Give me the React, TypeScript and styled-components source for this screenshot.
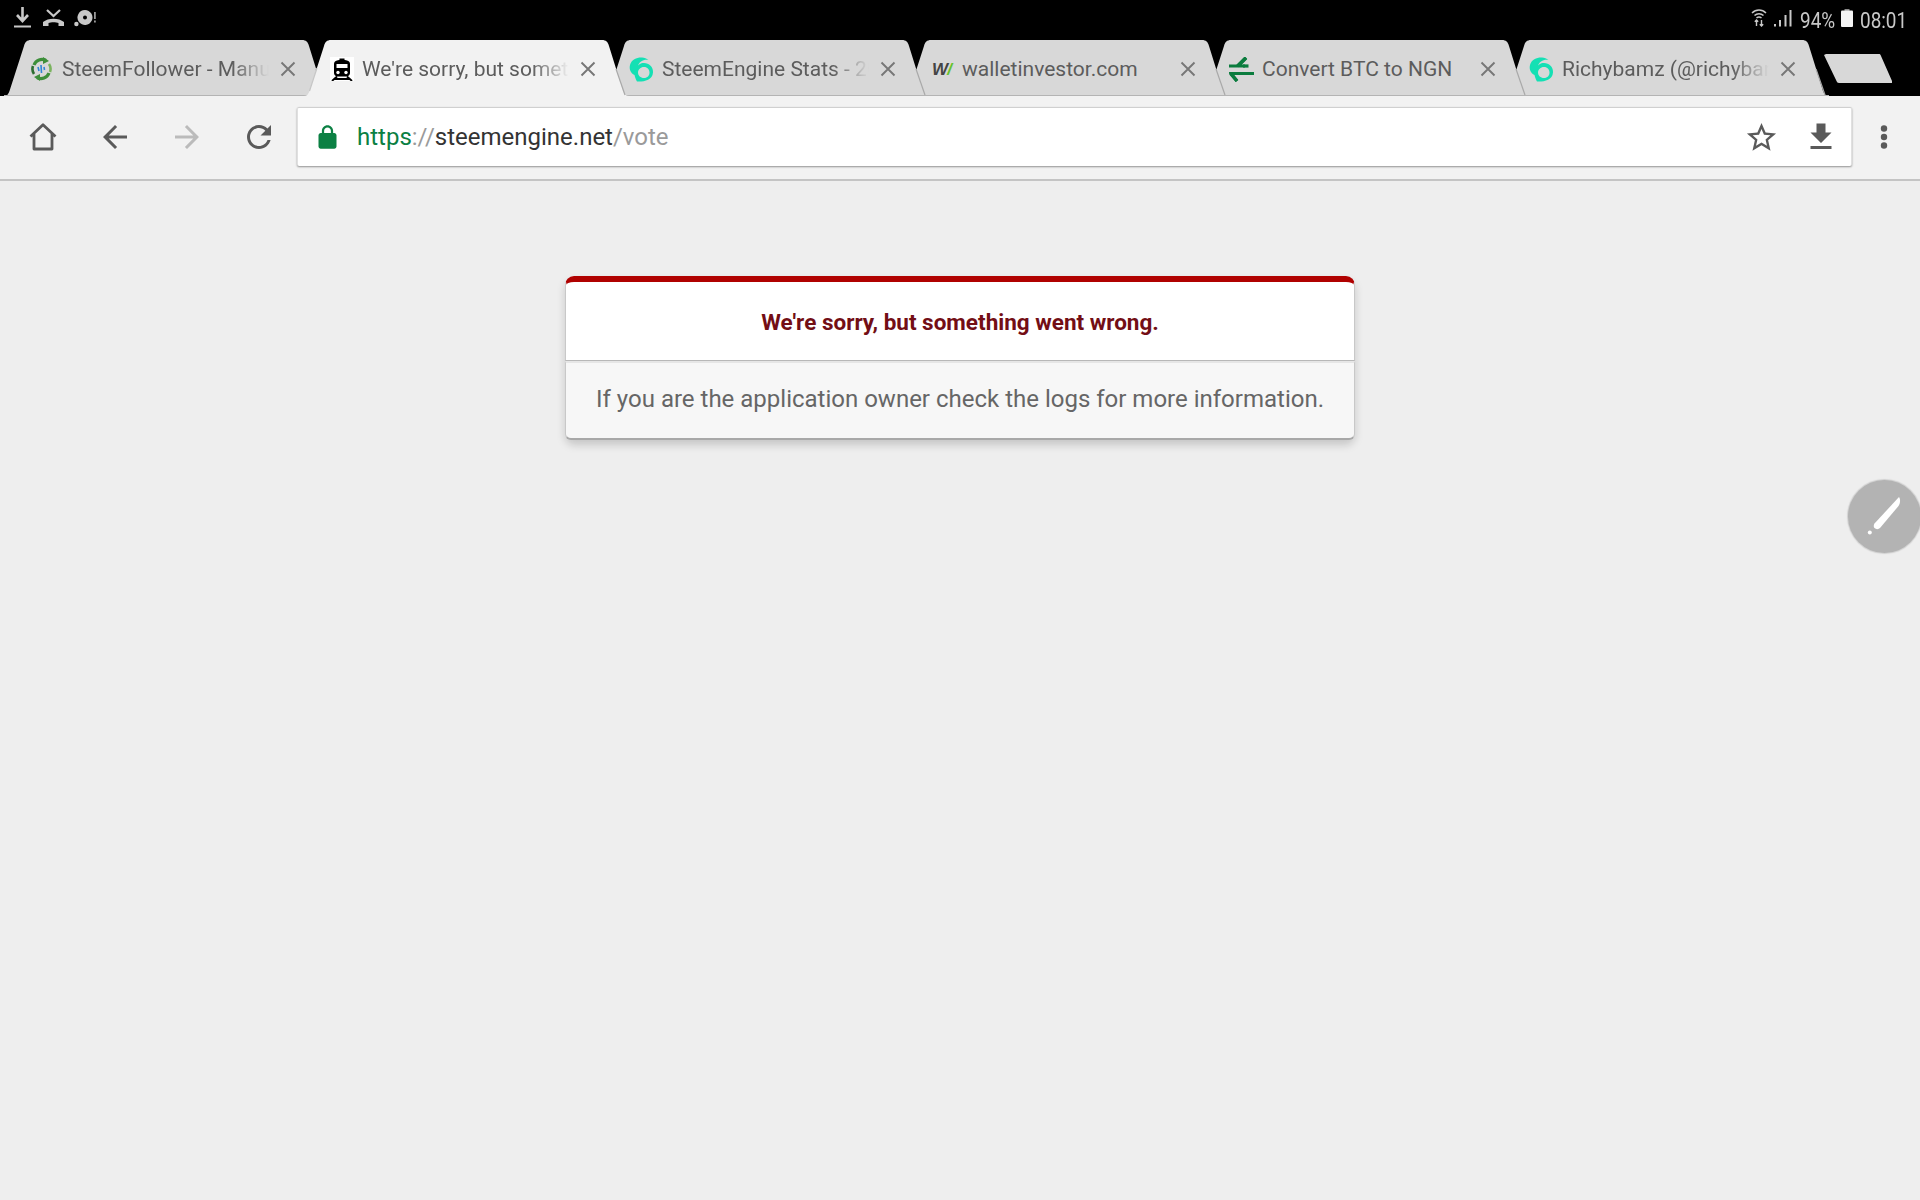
import * as React from "react";
import styled, { createGlobalStyle } from "styled-components";

const GlobalStyle = createGlobalStyle`
  html, body {
    margin: 0;
    padding: 0;
    background: #eeeeee;
  }
  * {
    box-sizing: border-box;
  }
`;

const Page = styled.div`
  position: relative;
  width: 1920px;
  height: 1200px;
  overflow: hidden;
  display: flex;
  flex-direction: column;
  background: #eeeeee;
  font-family: Roboto, "Liberation Sans", sans-serif;
`;

/* status bar */
const StatusBar = styled.div`
  height: 40px;
  background: #000;
  display: flex;
  align-items: center;
  justify-content: space-between;
  padding: 0 15px 5px 14px;
  color: #c8c8c8;
`;

const StatusGroup = styled.div`
  display: flex;
  align-items: center;
`;

const StatusText = styled.span<{ $w: number }>`
  display: inline-block;
  width: ${p => p.$w}px;
  font-size: 22px;
  line-height: 26px;
  white-space: nowrap;
  transform: scaleX(0.86);
  transform-origin: left center;
  margin-top: 6px;
`;

const StatusIcon = styled.svg<{ $ml?: number; $mr?: number }>`
  display: block;
  margin-left: ${p => p.$ml || 0}px;
  margin-right: ${p => p.$mr || 0}px;
`;

/* tab strip */
const TabStrip = styled.div`
  height: 56px;
  background: #000;
  display: flex;
  padding-left: 4px;
`;

const TabWrap = styled.div<{ $z: number; $first: boolean }>`
  position: relative;
  z-index: ${p => p.$z};
  flex: none;
  width: 325px;
  height: 56px;
  margin-left: ${p => (p.$first ? 0 : -25)}px;
  display: flex;
  align-items: center;
  padding: 2px 0 0 25px;
`;

const TabShape = styled.svg`
  position: absolute;
  left: 0;
  top: 0;
`;

const FaviconSlot = styled.div`
  position: relative;
  flex: none;
  width: 25px;
  height: 25px;
  display: flex;
  align-items: center;
  justify-content: center;
`;

const WalletMark = styled.span`
  font-family: "Liberation Sans", sans-serif;
  font-weight: 700;
  font-style: italic;
  font-size: 17px;
  line-height: 17px;
  color: #444;
  letter-spacing: -1px;
`;

const WalletSlash = styled.span`
  color: #66c22e;
`;

const TabTitle = styled.div<{ $fade: boolean }>`
  position: relative;
  flex: none;
  width: 207px;
  margin-left: 8px;
  overflow: hidden;
  white-space: nowrap;
  font-size: 21px;
  line-height: 28px;
  color: #5c5c5c;
  ${p =>
    p.$fade
      ? `-webkit-mask-image: linear-gradient(to right, #000 170px, transparent 207px);
         mask-image: linear-gradient(to right, #000 170px, transparent 207px);`
      : ""}
`;

const CloseIcon = styled.svg`
  position: relative;
  flex: none;
  margin-left: 11px;
`;

const NewTab = styled.svg`
  flex: none;
  margin: 14px 0 0 -5px;
  position: relative;
`;

/* toolbar */
const Toolbar = styled.div`
  height: 85px;
  background: #f2f2f2;
  border-bottom: 2px solid #c4c4c4;
  display: flex;
  align-items: center;
  padding: 0 0 2px 7px;
`;

const NavButton = styled.div`
  flex: none;
  width: 72px;
  height: 48px;
  display: flex;
  align-items: center;
  justify-content: center;
`;

const UrlBar = styled.div`
  flex: none;
  width: 1555px;
  height: 59px;
  margin-left: 2px;
  background: #fff;
  border-radius: 2px;
  border-top: 1px solid #d0d0d0;
  border-left: 1px solid #e0e0e0;
  border-right: 1px solid #e0e0e0;
  box-shadow: 0 1px 2px rgba(0, 0, 0, 0.4);
  display: flex;
  align-items: center;
  padding-left: 16px;
`;

const LockSlot = styled.div`
  flex: none;
  width: 27px;
  height: 27px;
  margin-right: 16px;
`;

const UrlText = styled.div`
  flex: 1;
  font-size: 24px;
  line-height: 30px;
  white-space: nowrap;
  color: #9a9a9a;
`;

const UrlPart = styled.span<{ $color: string }>`
  color: ${p => p.$color};
`;

const UrlAction = styled.div`
  flex: none;
  width: 60px;
  height: 48px;
  display: flex;
  align-items: center;
  justify-content: center;
`;

const MenuButton = styled.div`
  flex: none;
  width: 64px;
  display: flex;
  justify-content: center;
`;

/* error card */
const Content = styled.main`
  flex: 1;
  display: flex;
  justify-content: center;
  padding-top: 95px;
`;

const Card = styled.div`
  width: 790px;
  height: 164px;
  border-radius: 9px;
  box-shadow: 0 5px 9px rgba(0, 0, 0, 0.17);
  display: flex;
  flex-direction: column;
`;

const CardHead = styled.div`
  height: 85px;
  background: #fff;
  border-top: 6px solid #b00100;
  border-left: 1px solid #c8c8c8;
  border-right: 1px solid #c8c8c8;
  border-bottom: 1px solid #b8b8b8;
  border-radius: 9px 9px 0 0;
  display: flex;
  align-items: center;
  justify-content: center;
`;

const CardTitle = styled.h1`
  margin: 2px 0 0;
  font-size: 22.5px;
  line-height: 30px;
  font-weight: 700;
  color: #730e15;
`;

const CardBody = styled.div`
  flex: 1;
  background: #f7f7f7;
  border-top: 2px solid #e6e6e6;
  border-left: 1px solid #c8c8c8;
  border-right: 1px solid #c8c8c8;
  border-bottom: 2px solid #a8a8a8;
  border-radius: 0 0 6px 6px;
  display: flex;
  align-items: center;
  justify-content: center;
`;

const CardText = styled.p`
  margin: 0 0 4px;
  font-size: 24px;
  line-height: 30px;
  color: #666;
`;

/* floating pen button */
const PenButton = styled.div`
  position: absolute;
  left: 1848px;
  top: 480px;
  width: 73px;
  height: 73px;
  border-radius: 50%;
  background: #b3b3b3;
  box-shadow: 0 0 1px 1px #d0d0d0;
  display: flex;
  align-items: center;
  justify-content: center;
`;

const SideLine = "#a9a9a9";

const TabOutline: React.FC<{ active: boolean }> = ({ active }) => (
  <TabShape width="325" height="56" viewBox="0 0 325 56">
    <path
      d="M0 56 C3 56 4.5 54 5.5 51 L20 6 C21 2 23 0 27 0 L298 0 C302 0 304 2 305 6 L319 51 C320 54 322 56 325 56 Z"
      fill={active ? "#f2f2f2" : "#d8d8d8"}
    />
    {!active && <rect x="0" y="55" width="325" height="1" fill="#b4b4b4" />}
    <path d="M5.5 51 L13 28" stroke="#c6c6c6" strokeWidth="1.2" fill="none" opacity={active ? 1 : 0} />
    <path d="M312 29 L321 55" stroke={SideLine} strokeWidth="1.2" fill="none" />
  </TabShape>
);

const FollowerIcon = () => (
  <svg width="21" height="24" viewBox="0 0 21 24">
    <path d="M3 8 A8.5 8.5 0 0 1 15 3.5" stroke="#3d8f3a" strokeWidth="3.2" fill="none" />
    <path d="M18 16 A8.5 8.5 0 0 1 6 20.5" stroke="#3d8f3a" strokeWidth="3.2" fill="none" />
    <path d="M12 0 L18 4 L12 7 Z" fill="#3d8f3a" />
    <path d="M9 24 L3 20 L9 17 Z" fill="#3d8f3a" />
    <path d="M2 9 A9 9 0 0 0 3 17" stroke="#2c6e31" strokeWidth="2.6" fill="none" />
    <path d="M19 15 A9 9 0 0 0 18 7" stroke="#7ab35e" strokeWidth="2.6" fill="none" />
    <path d="M7 10 L8 14 M10 8 L10.5 16 M13 10 L13.5 13" stroke="#2f86d6" strokeWidth="1.6" fill="none" />
  </svg>
);

const TrainIcon = () => (
  <svg width="24" height="24" viewBox="0 0 24 24">
    <rect width="24" height="24" fill="#fff" />
    <path d="M9.5 3 L14.5 3 L14.5 1.5 L9.5 1.5 Z" fill="#000" />
    <path
      d="M7 3.5 C9 2.6 15 2.6 17 3.5 C19 4 20 5 20 7 L20 16 C20 18 18.6 19 17 19.5 L7 19.5 C5.4 19 4 18 4 16 L4 7 C4 5 5 4 7 3.5 Z M6.5 7 L6.5 11 L17.5 11 L17.5 7 Z"
      fill="#000"
      fillRule="evenodd"
    />
    <circle cx="8" cy="15.5" r="1.7" fill="#fff" />
    <circle cx="16" cy="15.5" r="1.7" fill="#fff" />
    <path d="M7 19.5 L2 24 M17 19.5 L22 24 M5 22 L19 22" stroke="#000" strokeWidth="1.8" fill="none" />
  </svg>
);

const EngineIcon = () => (
  <svg width="25" height="25" viewBox="0 0 25 25">
    <path
      d="M13 0.5 C9 0 2.5 2 1 8 C0 12 1.5 16 5.5 18 C6 20 6.5 22 8 24.5 C14 25 23.5 23.5 24 15.5 C24.5 10 20 6 15 6 C11 6 9.5 8 9 9 C10 4.5 15 2 19.5 3 C17.5 1.5 15.5 0.8 13 0.5 Z M15 10 C11.5 10 9 12.5 9 15.5 C9 18.5 11.5 21 15 21 C18.5 21 20.5 18.5 20.5 15.5 C20.5 12.5 18.5 10 15 10 Z"
      fill="#14e0b4"
      fillRule="evenodd"
    />
  </svg>
);

const WalletIcon = () => (
  <WalletMark>
    W<WalletSlash>/</WalletSlash>
  </WalletMark>
);

const ConvertIcon = () => (
  <svg width="25" height="25" viewBox="0 0 25 25">
    <path
      d="M0 9 L16 9 M8 24 L2 16.5 L25 16.5 M17 1 L9 9"
      stroke="#0b7c3e"
      strokeWidth="3.2"
      fill="none"
    />
    <path d="M8.5 9 L17 0.5 M8 24 L1.5 16.5" stroke="#0b7c3e" strokeWidth="3.4" fill="none" />
    <path d="M17 1.5 L22 7" stroke="none" fill="none" />
    <path d="M14 9 L19.5 9" stroke="#0b7c3e" strokeWidth="3.2" fill="none" />
  </svg>
);

interface TabData {
  title: string;
  fade: boolean;
  icon: React.ReactNode;
  active?: boolean;
}

const tabs: TabData[] = [
  { title: "SteemFollower - Manual Vote", fade: true, icon: <FollowerIcon /> },
  { title: "We're sorry, but something went wrong", fade: true, icon: <TrainIcon />, active: true },
  { title: "SteemEngine Stats - 2020", fade: true, icon: <EngineIcon /> },
  { title: "walletinvestor.com", fade: false, icon: <WalletIcon /> },
  { title: "Convert BTC to NGN", fade: false, icon: <ConvertIcon /> },
  { title: "Richybamz (@richybamz)", fade: true, icon: <EngineIcon /> }
];

const Tab: React.FC<{ data: TabData; index: number }> = ({ data, index }) => (
  <TabWrap $z={data.active ? 10 : 6 - index} $first={index === 0}>
    <TabOutline active={!!data.active} />
    <FaviconSlot>{data.icon}</FaviconSlot>
    <TabTitle $fade={data.fade}>{data.title}</TabTitle>
    <CloseIcon width="16" height="16" viewBox="0 0 16 16">
      <path d="M1.5 1.5 L14.5 14.5 M14.5 1.5 L1.5 14.5" stroke="#777" strokeWidth="1.9" />
    </CloseIcon>
  </TabWrap>
);

const MatIcon: React.FC<{ d: string; size: number; color: string }> = ({ d, size, color }) => (
  <svg width={size} height={size} viewBox="0 0 24 24">
    <path d={d} fill={color} />
  </svg>
);

const App: React.FC = () => (
  <Page>
    <GlobalStyle />
    <StatusBar>
      <StatusGroup>
        <StatusIcon width="17" height="21" viewBox="0 0 17 21">
          <path d="M8.5 0 L8.5 12 M3 8 L8.5 14 L14 8" stroke="#c8c8c8" strokeWidth="2.6" fill="none" />
          <rect x="0" y="18.5" width="17" height="2" fill="#c8c8c8" />
        </StatusIcon>
        <StatusIcon width="21" height="18" viewBox="0 0 21 18" $ml={12}>
          <path d="M4 1 L10.5 7 L17 1" stroke="#c8c8c8" strokeWidth="2.2" fill="none" />
          <path
            d="M0 17 L0 13 C5 8.5 16 8.5 21 13 L21 17 L15.5 17 L15.5 14 C13 13 8 13 5.5 14 L5.5 17 Z"
            fill="#c8c8c8"
          />
        </StatusIcon>
        <StatusIcon width="22" height="18" viewBox="0 0 22 18" $ml={10}>
          <path
            d="M11 1 A7.5 7.5 0 1 1 5 13 A7.5 7.5 0 0 1 11 1 Z M11 6.5 A2 2 0 1 0 11 10.5 A2 2 0 0 0 11 6.5 Z"
            fill="#c8c8c8"
            fillRule="evenodd"
          />
          <circle cx="2.4" cy="15" r="2.2" fill="#c8c8c8" />
          <rect x="20" y="3" width="1.8" height="7" fill="#9a9a9a" />
          <rect x="20" y="11.5" width="1.8" height="2" fill="#9a9a9a" />
        </StatusIcon>
      </StatusGroup>
      <StatusGroup>
        <StatusIcon width="16" height="19" viewBox="0 0 16 19" $mr={7}>
          <path d="M1 5 C5 1 11 1 15 5 M3.5 7.5 C6 5 10 5 12.5 7.5 M5.5 10 C7 8.7 9 8.7 10.5 10" stroke="#c8c8c8" strokeWidth="1.5" fill="none" />
          <path d="M5.5 12 L5.5 18 M3.8 13.8 L5.5 12 L7.2 13.8 M10.5 18 L10.5 12 M8.8 16.2 L10.5 18 L12.2 16.2" stroke="#c8c8c8" strokeWidth="1.4" fill="none" />
        </StatusIcon>
        <StatusIcon width="18" height="18" viewBox="0 0 18 18" $mr={8}>
          <rect x="0" y="15" width="2" height="2.5" fill="#c8c8c8" />
          <rect x="5" y="11" width="2" height="6.5" fill="#c8c8c8" />
          <rect x="10.5" y="6" width="2" height="11.5" fill="#c8c8c8" />
          <rect x="15.5" y="1" width="2" height="16.5" fill="#c8c8c8" />
        </StatusIcon>
        <StatusText $w={41}>94%</StatusText>
        <StatusIcon width="12" height="18" viewBox="0 0 12 18" $mr={7}>
          <rect x="3.5" y="0" width="5" height="2" fill="#8a8a8a" />
          <rect x="0" y="1.5" width="12" height="16.5" rx="1" fill="#f4f4f4" />
        </StatusIcon>
        <StatusText $w={45}>08:01</StatusText>
      </StatusGroup>
    </StatusBar>

    <TabStrip>
      {tabs.map((t, i) => (
        <Tab key={t.title} data={t} index={i} />
      ))}
      <NewTab width="68" height="29" viewBox="0 0 68 29">
        <path d="M2 0 L55 0 C56 0 56.5 0.5 57 2 L68 27 L68 29 L15 29 C13.5 29 13 28 12.5 27 L0 1 Z" fill="#d8d8d8" />
      </NewTab>
    </TabStrip>

    <Toolbar>
      <NavButton>
        <svg width="28" height="28" viewBox="0 0 28 28">
          <path
            d="M1.5 13.5 L14 1.8 L26.5 13.5 M5 10.5 L5 26 L23 26 L23 10.5"
            stroke="#5a5a5a"
            strokeWidth="2.8"
            strokeLinejoin="round"
            fill="none"
          />
        </svg>
      </NavButton>
      <NavButton>
        <MatIcon size={36} color="#5a5a5a" d="M20 11H7.83l5.59-5.59L12 4l-8 8 8 8 1.41-1.41L7.83 13H20v-2z" />
      </NavButton>
      <NavButton>
        <MatIcon size={36} color="#bbbbbb" d="M12 4l-1.41 1.41L16.17 11H4v2h12.17l-5.58 5.59L12 20l8-8z" />
      </NavButton>
      <NavButton>
        <MatIcon
          size={36}
          color="#5a5a5a"
          d="M17.65 6.35C16.2 4.9 14.21 4 12 4c-4.42 0-7.99 3.58-7.99 8s3.57 8 7.99 8c3.73 0 6.84-2.55 7.73-6h-2.08c-.82 2.33-3.04 4-5.65 4-3.31 0-6-2.69-6-6s2.69-6 6-6c1.66 0 3.14.69 4.22 1.78L13 11h7V4l-2.35 2.35z"
        />
      </NavButton>
      <UrlBar>
        <LockSlot>
          <MatIcon
            size={27}
            color="#0b8043"
            d="M18 8h-1V6c0-2.76-2.24-5-5-5S7 3.24 7 6v2H6c-1.1 0-2 .9-2 2v10c0 1.1.9 2 2 2h12c1.1 0 2-.9 2-2V10c0-1.1-.9-2-2-2zm-3 0H9V6c0-1.66 1.34-3 3-3s3 1.34 3 3v2z"
          />
        </LockSlot>
        <UrlText>
          <UrlPart $color="#0b8043">https</UrlPart>
          <UrlPart $color="#9a9a9a">://</UrlPart>
          <UrlPart $color="#333333">steemengine.net</UrlPart>
          /vote
        </UrlText>
        <UrlAction>
          <MatIcon
            size={35}
            color="#5a5a5a"
            d="M22 9.24l-7.19-.62L12 2 9.19 8.63 2 9.24l5.46 4.73L5.82 21 12 17.27 18.18 21l-1.63-7.03L22 9.24zM12 15.4l-3.76 2.27 1-4.28-3.32-2.88 4.38-.38L12 6.1l1.71 4.04 4.38.38-3.32 2.88 1 4.28L12 15.4z"
          />
        </UrlAction>
        <UrlAction>
          <MatIcon size={36} color="#5a5a5a" d="M19 9h-4V3H9v6H5l7 7 7-7zM5 18v2h14v-2H5z" />
        </UrlAction>
      </UrlBar>
      <MenuButton>
        <svg width="8" height="24" viewBox="0 0 8 24">
          <circle cx="4" cy="3.5" r="3.2" fill="#5a5a5a" />
          <circle cx="4" cy="12" r="3.2" fill="#5a5a5a" />
          <circle cx="4" cy="20.5" r="3.2" fill="#5a5a5a" />
        </svg>
      </MenuButton>
    </Toolbar>

    <Content>
      <Card>
        <CardHead>
          <CardTitle>We're sorry, but something went wrong.</CardTitle>
        </CardHead>
        <CardBody>
          <CardText>If you are the application owner check the logs for more information.</CardText>
        </CardBody>
      </Card>
    </Content>

    <PenButton>
      <svg width="36" height="44" viewBox="0 0 36 44">
        <path d="M32 2 C33.5 4 33.5 8 31.5 11 L13 33 C11.5 34.5 9 34.5 7.5 33 C6.5 32 6.5 30 7.5 28.5 Z" fill="#fff" />
        <circle cx="2.8" cy="37.5" r="2" fill="#fff" />
      </svg>
    </PenButton>
  </Page>
);

export default App;
